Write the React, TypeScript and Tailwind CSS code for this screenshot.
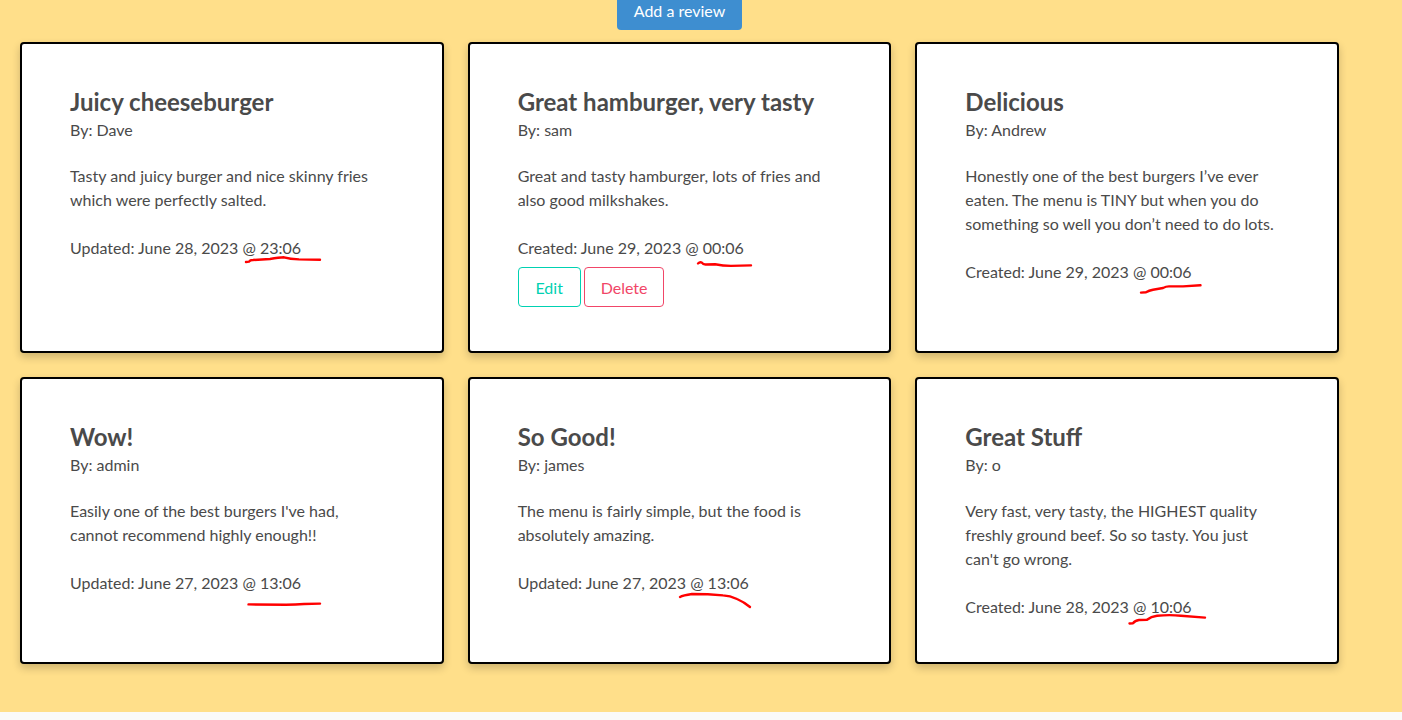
type Review = {
  title: string;
  author: string;
  body: string;
  stamp: string;
  mark: string;
  editable?: boolean;
};

const reviews: Review[] = [
  {
    title: "Juicy cheeseburger",
    author: "Dave",
    body: "Tasty and juicy burger and nice skinny fries which were perfectly salted.",
    stamp: "Updated: June 28, 2023 @ 23:06",
    mark: "M176 26 L179 25.6 Q180 24 183 24 L200 23 Q209 21.5 214 21.3 Q220 23 229 23.4 L250 23.7",
  },
  {
    title: "Great hamburger, very tasty",
    author: "sam",
    body: "Great and tasty hamburger, lots of fries and also good milkshakes.",
    stamp: "Created: June 29, 2023 @ 00:06",
    mark: "M180 27.5 Q182 25.5 184 26.7 Q185 28.7 188 28.5 L197 28.3 Q205 29.8 213 29.9 L233 29.4",
    editable: true,
  },
  {
    title: "Delicious",
    author: "Andrew",
    body: "Honestly one of the best burgers I’ve ever eaten. The menu is TINY but when you do something so well you don’t need to do lots.",
    stamp: "Created: June 29, 2023 @ 00:06",
    mark: "M176 32.6 L181 32.3 Q184 30.5 188 29.7 L198 28 Q201 26.4 204 26.4 L218 26.4 L235.5 25.3",
  },
  {
    title: "Wow!",
    author: "admin",
    body: "Easily one of the best burgers I've had, cannot recommend highly enough!!",
    stamp: "Updated: June 27, 2023 @ 13:06",
    mark: "M178.5 33.4 L216 33.7 Q226 33.6 234 33 L250 32.6",
  },
  {
    title: "So Good!",
    author: "james",
    body: "The menu is fairly simple, but the food is absolutely amazing.",
    stamp: "Updated: June 27, 2023 @ 13:06",
    mark: "M162 26 Q165 24.3 174 23 Q190 23 205 24.4 Q212 24.6 219 28 Q226 31 232 36",
  },
  {
    title: "Great Stuff",
    author: "o",
    body: "Very fast, very tasty, the HIGHEST quality freshly ground beef. So so tasty. You just can't go wrong.",
    stamp: "Created: June 28, 2023 @ 10:06",
    mark: "M164.5 28.5 L168 28.3 Q170 25.5 174 25 L182 24.7 Q186 21.5 192 20.8 Q204 19.5 216 20.7 L240 22.6",
  },
];

function ReviewCard({ review }: { review: Review }) {
  return (
    <article className="rounded-sm border-2 border-black bg-white px-12 pt-11 pb-[43px] shadow-[0_4px_8px_0_rgba(0,0,0,0.2)]">
      <h2 className="text-2xl/7 font-bold">{review.title}</h2>
      <p className="mt-0.5">By: {review.author}</p>
      <p className="mt-[22px] pr-2">{review.body}</p>
      <p className="relative mt-6">
        {review.stamp}
        <svg
          className="pointer-events-none absolute top-0 left-0 overflow-visible"
          width="256"
          height="40"
          fill="none"
          stroke="#ff0000"
          strokeWidth="2.4"
          strokeLinecap="round"
          strokeLinejoin="round"
          aria-hidden="true"
        >
          <path d={review.mark} />
        </svg>
      </p>
      {review.editable && (
        <div className="mt-[7px] flex gap-[3px] pb-px">
          <button type="button" className="h-10 min-w-[63px] rounded-sm border border-[#00d1b2] px-4 pt-0.5 text-[#00d1b2]">
            Edit
          </button>
          <button type="button" className="h-10 min-w-[63px] rounded-sm border border-[#f14668] px-4 pt-0.5 text-[#f14668]">
            Delete
          </button>
        </div>
      )}
    </article>
  );
}

export default function App() {
  return (
    <div className="min-h-screen bg-[#fafafa] font-['Lato',sans-serif] text-base/6 text-[#4a4a4a]">
      <main className="flow-root bg-[#ffdf8a] pr-[63px] pb-12 pl-5">
        <div className="-mt-2.5 flex justify-center">
          <button type="button" className="h-10 rounded-sm border border-transparent bg-[#3e8ed0] px-4 pt-0.5 text-white">
            Add a review
          </button>
        </div>
        <section className="mt-3 grid grid-cols-3 gap-6">
          {reviews.map((review) => (
            <ReviewCard key={review.title} review={review} />
          ))}
        </section>
      </main>
    </div>
  );
}
